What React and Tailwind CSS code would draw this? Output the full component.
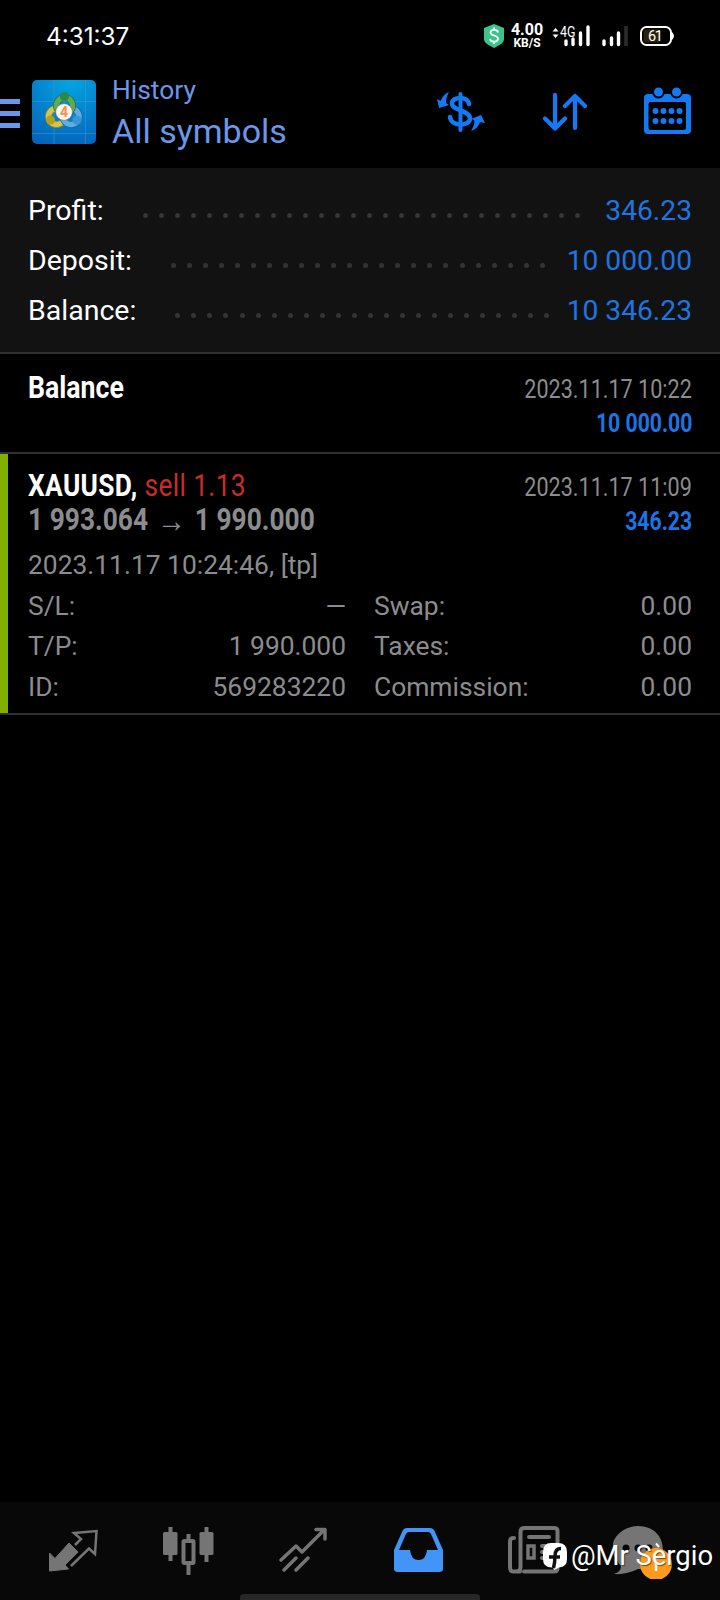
import React from 'react';

const summary = [
  { label: 'Profit:', value: '346.23', dots: 28, line: 'ml-[39px] w-[438px]' },
  { label: 'Deposit:', value: '10 000.00', dots: 24, line: 'ml-[39px] w-[374px]' },
  { label: 'Balance:', value: '10 346.23', dots: 24, line: 'ml-[39px] w-[374px]' },
];

const details = [
  ['S/L:', '—', 'Swap:', '0.00'],
  ['T/P:', '1 990.000', 'Taxes:', '0.00'],
  ['ID:', '569283220', 'Commission:', '0.00'],
];

function StatusBar() {
  return (
    <div className="flex h-[72px] items-center pl-[46px] pr-[45px] text-white">
      <span className="mt-px font-['Inter'] text-[24.3px] leading-none">4:31:37</span>
      <div className="ml-auto flex items-center">
        <svg className="h-[24px] w-[20px]" viewBox="0 0 20 24">
          <path d="M10 0L20 4V15C20 19 15 21.500 10 24C5 21.500 0 19 0 15V4Z" fill="#3cc58a" />
          <path d="M14 8.500C13.500 5 6.500 5.200 6.500 8.500C6.500 12.500 14 10.500 14 14.800C14 18.500 6.500 18.500 6 14.800M10 3.500V6M10 17.500V20" fill="none" stroke="#fff" strokeWidth="1.800" />
        </svg>
        <div className="ml-[7px] flex w-[32px] flex-col items-center font-['Roboto'] font-bold">
          <span className="text-[16px] leading-[14px]">4.00</span>
          <span className="text-[12px] leading-[12px]">KB/S</span>
        </div>
        <svg className="ml-[9px] h-[24px] w-[76px]" viewBox="0 0 76 24">
          <path d="M0.500 7.500L3.500 4L6.500 7.500M0.500 10.500L3.500 14L6.500 10.500" fill="#fff" />
          <text x="8" y="13" fill="#fff" fontFamily="Roboto" fontSize="14" textLength="15.500" lengthAdjust="spacingAndGlyphs">4G</text>
          <path d="M14 17V20.500M21 15V20.500M28.500 9V20.500M36 3V20.500M52 17V20.500M59.500 14V20.500M66.500 9V20.500" stroke="#fff" strokeWidth="3.400" strokeLinecap="round" />
          <path d="M74 2V22" stroke="#2c2c2c" strokeWidth="3.500" />
        </svg>
        <svg className="ml-[12px] h-[20px] w-[35px]" viewBox="0 0 35 20">
          <rect x="3.500" y="3.500" width="17" height="13" rx="2" fill="#2b210c" />
          <rect x="1" y="1" width="30" height="18" rx="5.500" fill="none" stroke="#fff" strokeWidth="2" />
          <path d="M32 6Q36 10 32 14Z" fill="#fff" />
          <text x="15.500" y="15" textAnchor="middle" fill="#fff" fontFamily="Roboto" fontSize="14.500" textLength="15">61</text>
        </svg>
      </div>
    </div>
  );
}

function Logo() {
  return (
    <svg className="ml-[12px] size-[64px]" viewBox="0 0 64 64">
      <defs>
        <radialGradient id="sky" cx=".6" cy="0" r="1.100">
          <stop offset="0" stopColor="#04a6e4" />
          <stop offset="1" stopColor="#0462b8" />
        </radialGradient>
      </defs>
      <rect width="64" height="64" rx="5" fill="url(#sky)" />
      <path d="M22 0V64M53.500 0V64M0 21.500H64M0 53.500H64" stroke="#3ba3dd" strokeWidth=".8" opacity=".6" />
      <g fill="none">
        <circle cx="24.500" cy="36.500" r="8" stroke="#827f22" strokeWidth="7" />
        <circle cx="24.500" cy="36.500" r="8" stroke="#cfc654" strokeWidth="5.500" />
        <circle cx="39" cy="36.500" r="8" stroke="#1767a3" strokeWidth="7" />
        <circle cx="39" cy="36.500" r="8" stroke="#61aede" strokeWidth="5.500" />
        <circle cx="32.500" cy="25.500" r="8" stroke="#287240" strokeWidth="7" />
        <circle cx="32.500" cy="25.500" r="8" stroke="#5fa957" strokeWidth="5.500" />
      </g>
      <circle cx="32.500" cy="16.500" r="4.500" fill="#278b43" />
      <circle cx="18.500" cy="40" r="4.500" fill="#b3a01f" />
      <circle cx="45" cy="40" r="4.500" fill="#3796d8" />
      <circle cx="32" cy="32" r="8.300" fill="#fbf5ee" stroke="#777" strokeWidth=".5" />
      <text x="32" y="37" textAnchor="middle" fill="#f0924d" fontFamily="Roboto" fontWeight="bold" fontSize="14">4</text>
    </svg>
  );
}

function Header() {
  return (
    <header className="flex h-24 items-start pt-2">
      <svg className="mt-[18px] h-[32px] w-[20px]" viewBox="0 0 20 32">
        <path d="M0 3.500H20M0 15.500H20M0 27.500H20" stroke="#6b97ea" strokeWidth="5" />
      </svg>
      <Logo />
      <div className="ml-[16px] flex flex-col text-[#6b97ea]">
        <span className="-mt-[6px] text-[26.4px] leading-[32px]">History</span>
        <span className="mt-[5px] text-[34px] leading-[40px]">All symbols</span>
      </div>
      <div className="ml-auto mr-[29.5px] flex text-[#1479f5]">
        <svg className="mt-[10px] h-[44px] w-[50px]" viewBox="0 0 50 44" fill="none" stroke="currentColor">
          <path d="M33 14C32 6 16 6 16 13.500C16 21 34 20 34 28.500C34 36.500 15 37 14 27" strokeWidth="4.500" strokeLinecap="round" />
          <path d="M24.500 4V40" strokeWidth="4" strokeLinecap="round" />
          <path d="M13 2C8 4 5.500 8 5 11L1 9L3 18L13 15L10 13C10 9 11 5 13 2ZM35 41C38 36 39 33 38 30L35 29L45 25L49 33L44 32C43 36 39 40 35 41Z" fill="currentColor" stroke="none" />
        </svg>
        <svg className="ml-[56px] mt-[13px] h-[38px] w-[45px]" viewBox="0 0 45 38" fill="none" stroke="currentColor" strokeWidth="4.200" strokeLinecap="round" strokeLinejoin="round">
          <path d="M13 2V35M3 25.500L13 35.500L23 25.500M33 35V3M23 13L33 3L43 13" />
        </svg>
        <svg className="ml-[57px] mt-[6px] h-[48px] w-[47px]" viewBox="0 0 47 48">
          <rect y="8" width="47" height="40" rx="4" fill="currentColor" />
          <rect x="4.500" y="16" width="37.500" height="28" rx="2" fill="#000" />
          <g fill="currentColor" stroke="#000" strokeWidth="2">
            <circle cx="14.500" cy="6" r="5.500" />
            <circle cx="32.500" cy="6" r="5.500" />
          </g>
          <path d="M11.500 25H37M11.500 35H37" stroke="currentColor" strokeWidth="6" strokeLinecap="round" strokeDasharray="0 8" />
        </svg>
      </div>
    </header>
  );
}

function Summary() {
  return (
    <section className="h-[186px] border-b-2 border-[#303030] bg-[#121212] px-[28px] pt-[18px]">
      {summary.map((row) => (
        <div key={row.label} className="flex h-[50px] items-center text-[28.5px] leading-[50px]">
          <span className="text-white">{row.label}</span>
          <div className={`flex justify-between pt-[8px] ${row.line}`}>
            {Array.from({ length: row.dots }, (_, i) => (
              <i key={i} className="size-[5px] rounded-full bg-[#343434]" />
            ))}
          </div>
          <span className="ml-auto text-[28.2px] text-[#1f75e0]">{row.value}</span>
        </div>
      ))}
    </section>
  );
}

function Deals() {
  return (
    <main className="text-[#8c8c8e]">
      <div className="flex h-[100px] justify-between border-b-2 border-[#303030] px-[28px] pt-[17px]">
        <b className="origin-left scale-x-[.86] text-[31px] leading-[34px] text-white">Balance</b>
        <div className="mt-px flex flex-col items-end text-[26px] leading-[34px]">
          <span className="origin-right scale-x-[.83]">2023.11.17 10:22</span>
          <b className="origin-right scale-x-[.815] text-[#1c75e4]">10 000.00</b>
        </div>
      </div>
      <div className="flex h-[261px] border-b-2 border-[#303030]">
        <div className="w-2 bg-[#80b000]" />
        <div className="flex-1 pl-[20px] pr-[28px] pt-[15px]">
          <div className="flex justify-between">
            <div className="flex origin-left scale-x-[.85] flex-col text-[31px] leading-[34px]">
              <span className="tracking-[.4px] text-[#c82c2c]">
                <b className="text-white">XAUUSD,</b> sell 1.13
              </span>
              <b className="flex">
                1 993.064
                <span className="w-[55px] text-center text-[34px] leading-[34px]">→</span>
                1 990.000
              </b>
            </div>
            <div className="mt-px flex flex-col items-end text-[26px] leading-[34px]">
              <span className="origin-right scale-x-[.83]">2023.11.17 11:09</span>
              <b className="origin-right scale-x-[.815] text-[#1c75e4]">346.23</b>
            </div>
          </div>
          <p className="mt-[7px] text-[26.4px] leading-[40px]">2023.11.17 10:24:46, [tp]</p>
          <div className="mt-[1px] text-[26.4px] leading-[40.300px]">
            {details.map(([label, value, label2, value2]) => (
              <div key={label} className="flex">
                <span>{label}</span>
                <span className="ml-auto">{value}</span>
                <div className="ml-[28px] flex w-[318px] justify-between">
                  <span>{label2}</span>
                  <span>{value2}</span>
                </div>
              </div>
            ))}
          </div>
        </div>
      </div>
    </main>
  );
}

function TabBar() {
  return (
    <nav className="relative mt-auto h-[98px] bg-[#080808] text-[#757575]">
      <div className="flex pt-[21px]">
        <svg className="ml-[48px] h-[56px] w-[52px]" viewBox="0 0 52 56">
          <path d="M1.500 30L7 35.500L21 20L30 29L17 42L20.500 46L1.500 48Z" fill="currentColor" stroke="currentColor" strokeLinejoin="round" />
          <path d="M27 22L33 16L26 10L48.500 8L47 31L41 25.500L23 43" fill="none" stroke="currentColor" strokeWidth="2.500" />
        </svg>
        <svg className="ml-[63px] h-[56px] w-[52px]" viewBox="0 0 52 56">
          <path d="M7.500 4V38M43.500 4V39M25.500 11V52" stroke="currentColor" strokeWidth="4" />
          <rect y="9" width="14.500" height="23" rx="1.500" fill="currentColor" />
          <rect x="36.500" y="9" width="14" height="23" rx="1.500" fill="currentColor" />
          <rect x="20.500" y="18" width="10" height="22" rx="1" fill="#080808" stroke="currentColor" strokeWidth="4" />
        </svg>
        <svg className="ml-[63px] h-[56px] w-[52px]" viewBox="0 0 52 56" fill="none" stroke="currentColor" strokeWidth="3.500" strokeLinecap="round" strokeLinejoin="round">
          <path d="M3 37L18 23L24 29L46 7M38 6.500H47V16M6 47L18 35M18 47L30 35" />
        </svg>
        <svg className="ml-[64px] h-[56px] w-[50px]" viewBox="0 0 50 56">
          <path d="M0 27L8 9Q9.500 5 13 5H36Q39.500 5 41 9L49 27V46Q49 49 45 49H4Q0 49 0 46Z" fill="#4294f8" />
          <path d="M12 11Q13 9 15 9H34Q36 9 37 11L44 27H33Q32 37 24.500 37Q17 37 16 27H5Z" fill="#080808" />
        </svg>
        <svg className="ml-[64px] h-[56px] w-[52px]" viewBox="0 0 52 56" fill="none" stroke="currentColor" strokeWidth="4" strokeLinecap="round">
          <path d="M12 48.500H5Q2 48.500 2 44V18Q2 15 6 15M16 48.500H46Q49.500 48.500 49.500 45V8Q49.500 5 46 5H16Q12.500 5 12.500 9V44Q12.500 48.500 8 48.500M21 14H41" />
          <rect x="20" y="23" width="6" height="12" strokeWidth="3.500" />
          <path d="M34 23H42M34 29H42M34 35H42" />
        </svg>
        <svg className="ml-[53px] h-[56px] w-[62px]" viewBox="0 0 62 56">
          <path d="M1 51Q8 49 8 43C-13 20 9 3 25 3C58 3 58 49 25 46Q13 52 1 51Z" fill="currentColor" />
          <g fill="#080808">
            <circle cx="13" cy="25" r="3.500" />
            <circle cx="25" cy="25" r="3.500" />
            <circle cx="36" cy="25" r="3.500" />
          </g>
          <circle cx="43" cy="41" r="16" fill="#fc9b1d" />
          <path d="M43 34V48" stroke="#fff" strokeWidth="2.500" />
          <path d="M43 20.500L46 24" stroke="#fff" strokeWidth="2" />
        </svg>
      </div>
      <div className="absolute bottom-0 left-[240px] h-[6px] w-[240px] rounded-t bg-[#272727]" />
      <div className="absolute right-[7px] top-[37px] flex items-center text-[27.4px] leading-[34px] text-white [text-shadow:1px_1px_1px_#0008]">
        <svg className="mr-[2px] size-[28px]" viewBox="0 0 28 28">
          <path d="M10 1H17Q26 1 26 10V17Q26 25 18 25.500L13 28L12 25.500Q2 26 2 17V10Q2 1 10 1Z" fill="#fff" />
          <path d="M12.500 26Q14 20 14 14Q14 6.500 20 6.500M8 15H19" fill="none" stroke="#111" strokeWidth="3.500" />
        </svg>
        <span>@Mr Sergio</span>
      </div>
    </nav>
  );
}

function App() {
  return (
    <div className="flex h-[1600px] w-[720px] flex-col overflow-hidden bg-black font-['Roboto',sans-serif]">
      <StatusBar />
      <Header />
      <Summary />
      <Deals />
      <TabBar />
    </div>
  );
}

export default App;
